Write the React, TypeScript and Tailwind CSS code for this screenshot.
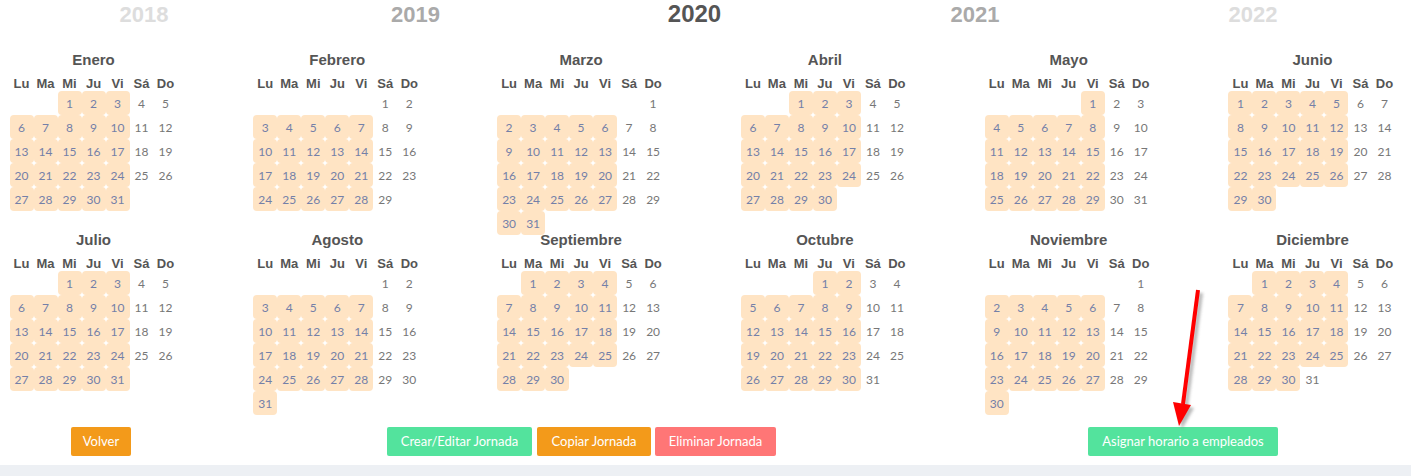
import React from 'react';

const YEARS = [
  { label: '2018', w: 'w-[288px]', cls: 'text-[22px] text-[#dddddd]' },
  { label: '2019', w: 'w-[255px]', cls: 'text-[22px] text-[#aaaaaa]' },
  { label: '2020', w: 'w-[303px]', cls: 'text-[24px] text-[#555555]' },
  { label: '2021', w: 'w-[258px]', cls: 'text-[22px] text-[#aaaaaa]' },
  { label: '2022', w: 'w-[298px]', cls: 'text-[22px] text-[#dddddd]' },
];

const MONTHS = [
  'Enero', 'Febrero', 'Marzo', 'Abril', 'Mayo', 'Junio',
  'Julio', 'Agosto', 'Septiembre', 'Octubre', 'Noviembre', 'Diciembre',
];

const WEEKDAYS = ['Lu', 'Ma', 'Mi', 'Ju', 'Vi', 'Sá', 'Do'];

// días laborables sin jornada asignada
const FREE = ['11-31'];

const Month = ({ index }: { index: number }) => {
  const offset = (new Date(2020, index, 1).getDay() + 6) % 7;
  const total = new Date(2020, index + 1, 0).getDate();
  const cells: (number | null)[] = [];
  for (let i = 0; i < offset; i++) cells.push(null);
  for (let d = 1; d <= total; d++) cells.push(d);

  return (
    <div className="h-[180px] w-[168px]">
      <div className="h-5 text-center font-['Liberation_Sans',Arial,sans-serif] text-[15px] font-bold leading-5 text-[#555]">
        {MONTHS[index]}
      </div>
      <div className="mt-[4px] grid h-[17px] grid-cols-7 font-['Liberation_Sans',Arial,sans-serif]">
        {WEEKDAYS.map((w) => (
          <div key={w} className="pt-[2px] text-center text-[13px] font-bold leading-[15px] text-[#555]">
            {w}
          </div>
        ))}
      </div>
      <div className="grid grid-cols-7 font-['Lato',sans-serif]">
        {cells.map((d, i) => {
          if (d === null) return <div key={i} className="h-6" />;
          const work = i % 7 < 5 && !FREE.includes(`${index}-${d}`);
          return (
            <div
              key={i}
              className={
                work
                  ? 'flex h-6 items-center justify-center rounded-[4px] bg-[#ffe4c4] pt-px text-[12px] text-[#7480a8]'
                  : 'flex h-6 items-center justify-center pt-px text-[12px] text-[#777]'
              }
            >
              {d}
            </div>
          );
        })}
      </div>
    </div>
  );
};

const Arrow = () => (
  <svg className="pointer-events-none absolute left-[1160px] top-[280px]" width="60" height="160" viewBox="1160 280 60 160">
    <defs>
      <filter id="sh" x="-50%" y="-50%" width="200%" height="200%">
        <feGaussianBlur stdDeviation="1.5" />
      </filter>
    </defs>
    <g fill="#888" stroke="#888" opacity="0.6" filter="url(#sh)">
      <line x1="1201" y1="293" x2="1186" y2="407" strokeWidth="4" />
      <polygon points="1176,405 1194,408 1182,429" strokeWidth="0" />
    </g>
    <g fill="#ff0000" stroke="#ff0000">
      <line x1="1198" y1="290" x2="1183" y2="404" strokeWidth="4" />
      <polygon points="1173,402 1191,405 1179,426" strokeWidth="0" />
    </g>
  </svg>
);

export default function App() {
  return (
    <div className="relative flex h-[476px] w-full flex-col bg-white font-['Lato','Liberation_Sans',sans-serif]">
      <div className="h-[465px]">
        <div className="flex h-[28px] items-center font-['Liberation_Sans',Arial,sans-serif] font-bold">
          {YEARS.map((y) => (
            <div key={y.label} className={`${y.w} text-center ${y.cls}`}>
              {y.label}
            </div>
          ))}
        </div>
        <div className="mt-[22px] grid grid-cols-[repeat(6,168px)] gap-x-[75.8px] pl-[9.5px]">
          {MONTHS.map((_, i) => (
            <Month key={i} index={i} />
          ))}
        </div>
        <div className="mt-[17px] flex h-[29px] text-[13px] text-white">
          <button className="ml-[71px] w-[60px] rounded-[2px] bg-[#f39a1a]">Volver</button>
          <button className="ml-[256px] w-[145px] rounded-[2px] bg-[#53e39d]">Crear/Editar Jornada</button>
          <button className="ml-[5px] w-[114px] rounded-[2px] bg-[#f39a1a]">Copiar Jornada</button>
          <button className="ml-[4px] w-[121px] rounded-[2px] bg-[#ff7676]">Eliminar Jornada</button>
          <button className="ml-[312px] w-[190px] rounded-[2px] bg-[#53e39d]">Asignar horario a empleados</button>
        </div>
      </div>
      <div className="flex-1 bg-[#edf0f4]" />
      <Arrow />
    </div>
  );
}
